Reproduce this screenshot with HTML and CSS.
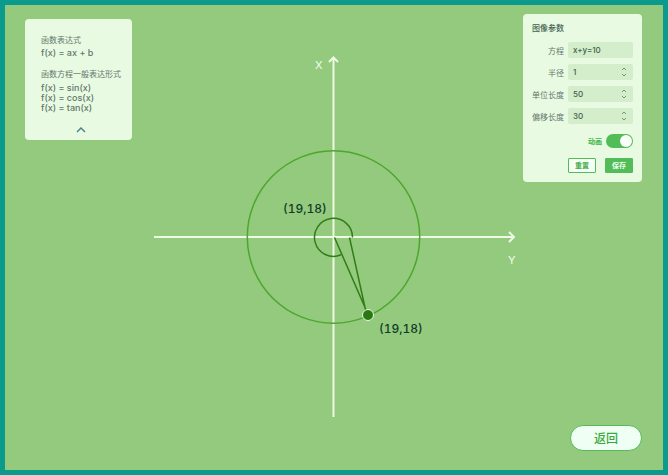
FILE: index.html
```html
<!DOCTYPE html>
<html lang="zh-CN">
<head>
<meta charset="utf-8">
<meta name="viewport" content="width=device-width, initial-scale=1">
<title>函数图像</title>
<link rel="stylesheet" href="styles.css">
</head>
<body>
<main class="stage">
  <svg class="graph" viewBox="5 5 658 465" role="img" aria-label="函数图像">
    <g class="axis">
      <path d="M154 237H514M509 232l5 5-5 5"/>
      <path d="M333.500 417V58M329 62l4.500-4.500 4.500 4.500"/>
    </g>
    <circle class="orbit" cx="333.500" cy="237" r="86.200"/>
    <path class="angle" d="M352.500 237.500A19 19 0 1 0 341 254.800"/>
    <path class="angle" d="M334.500 237.500L367 312M349.500 237.500L366 312"/>
    <circle class="point" cx="368" cy="315" r="5.500"/>
    <text class="axis-name" x="315" y="69">X</text>
    <text class="axis-name" x="508" y="264">Y</text>
    <text class="coordinate" x="283" y="213">(19,18)</text>
    <text class="coordinate" x="379" y="333">(19,18)</text>
  </svg>

  <aside class="panel formulas">
    <section class="formula-group">
      <h2>函数表达式</h2>
      <p>f(x) = ax + b</p>
    </section>
    <section class="formula-group">
      <h2>函数方程一般表达形式</h2>
      <p>f(x) = sin(x)</p>
      <p>f(x) = cos(x)</p>
      <p>f(x) = tan(x)</p>
    </section>
    <button class="collapse" type="button" aria-label="收起">
      <svg viewBox="0 0 10 6"><path d="M1 5l4-4 4 4"/></svg>
    </button>
  </aside>

  <form class="panel settings">
    <h2>图像参数</h2>
    <div class="fields">
      <label for="equation">方程</label>
      <div class="field"><input id="equation" type="text" value="x+y=10"></div>
      <label for="radius">半径</label>
      <div class="field">
        <input id="radius" type="number" value="1">
        <svg class="stepper" viewBox="0 0 6 10"><path d="M1 3l2-2 2 2M1 7l2 2 2-2"/></svg>
      </div>
      <label for="unit">单位长度</label>
      <div class="field">
        <input id="unit" type="number" value="50">
        <svg class="stepper" viewBox="0 0 6 10"><path d="M1 3l2-2 2 2M1 7l2 2 2-2"/></svg>
      </div>
      <label for="offset">偏移长度</label>
      <div class="field">
        <input id="offset" type="number" value="30">
        <svg class="stepper" viewBox="0 0 6 10"><path d="M1 3l2-2 2 2M1 7l2 2 2-2"/></svg>
      </div>
    </div>
    <div class="switch-row">
      <label for="animate">动画</label>
      <input id="animate" class="switch" type="checkbox" checked>
    </div>
    <div class="actions">
      <button class="action" type="reset">重置</button>
      <button class="action primary" type="submit">保存</button>
    </div>
  </form>

  <button class="back" type="button">返回</button>
</main>
</body>
</html>
```
FILE: styles.css
```css
* {
  box-sizing: border-box;
}

body {
  margin: 0;
  font-family: Inter, "Noto Sans CJK SC", sans-serif;
  font-size: 8px;
  color: #5f776b;
}

h2,
p {
  margin: 0;
}

button,
input {
  margin: 0;
  font-family: inherit;
}

button {
  cursor: pointer;
}

.stage {
  display: grid;
  grid-template-columns: auto 1fr auto;
  grid-template-rows: auto 1fr auto;
  min-height: 100vh;
  border: 5px solid #0c9a8c;
  background: #94ca7d;
}

.graph {
  grid-area: 1 / 1 / -1 / -1;
  width: 100%;
  height: 100%;
  fill: none;
}

.axis {
  stroke: #edfae4;
  stroke-width: 2;
}

.orbit {
  stroke: #4ea62e;
  stroke-width: 1.5;
}

.angle {
  stroke: #317d18;
  stroke-width: 1.5;
}

.point {
  fill: #2a7811;
  stroke: #e9fae2;
  stroke-width: 1;
}

.axis-name {
  fill: #f2fdec;
  font-size: 11px;
}

.coordinate {
  fill: #123c28;
  font-size: 12px;
  font-weight: 500;
  font-variant-numeric: tabular-nums;
}

.panel {
  z-index: 1;
  align-self: start;
  border-radius: 4px;
  background: #e9fae2;
}

.formulas {
  grid-area: 1 / 1 / 3 / 2;
  display: flex;
  flex-direction: column;
  margin: 14px 0 0 20px;
  padding: 15px 11px 7px 16px;
}

.formula-group {
  margin-bottom: 10px;
}

.formula-group h2 {
  margin-bottom: 2px;
  font-size: 8px;
  font-weight: 400;
  line-height: 12px;
}

.formula-group p {
  font-size: 9px;
  font-weight: 500;
  line-height: 10px;
}

.formula-group:nth-child(2) {
  margin-bottom: 14px;
}

.formula-group:nth-child(2) h2 {
  margin-bottom: 3px;
}

.collapse {
  display: flex;
  align-self: center;
  padding: 0;
  border: 0;
  background: none;
}

.collapse svg {
  width: 10px;
  height: 6px;
  fill: none;
  stroke: #4d8688;
  stroke-width: 1.5;
}

.settings {
  grid-area: 1 / 3 / 3 / 4;
  margin: 9px 21px 0 0;
  padding: 8px 9px 9px;
}

.settings h2 {
  margin-bottom: 8px;
  color: #405f50;
  font-size: 8px;
  font-weight: 500;
  line-height: 12px;
}

.fields {
  display: grid;
  grid-template-columns: auto 65px;
  align-items: center;
  gap: 6px 4px;
}

.fields label {
  text-align: right;
}

.field {
  display: flex;
  align-items: center;
  height: 16px;
  padding: 0 6px 0 5px;
  border-radius: 2px;
  background: #d4edcb;
}

.field input {
  flex: 1;
  min-width: 0;
  padding: 0;
  border: 0;
  outline: 0;
  background: none;
  color: #42604e;
  font-size: 8px;
  font-weight: 500;
  appearance: textfield;
}

.stepper {
  width: 6px;
  height: 10px;
  fill: none;
  stroke: #739680;
}

.switch-row {
  display: flex;
  align-items: center;
  justify-content: flex-end;
  gap: 4px;
  margin-top: 10px;
  color: #43b549;
  font-size: 7px;
  font-weight: 700;
}

.switch {
  display: flex;
  justify-content: flex-end;
  width: 27px;
  height: 14px;
  padding: 1px;
  border-radius: 7px;
  background: #52bc58;
  appearance: none;
}

.switch::before {
  width: 12px;
  border-radius: 50%;
  background: #fafffa;
  content: "";
}

.switch:not(:checked) {
  justify-content: flex-start;
  background: #a9c9a2;
}

.actions {
  display: flex;
  justify-content: flex-end;
  gap: 9px;
  margin-top: 10px;
}

.action {
  width: 28px;
  height: 15px;
  padding: 0;
  border: 1px solid #52bc58;
  border-radius: 1px;
  background: #f5fff5;
  color: #3fab45;
  font-size: 7px;
  font-weight: 700;
  line-height: 12px;
}

.primary {
  background: #52bc58;
  color: #edffed;
}

.back {
  z-index: 1;
  grid-area: 3 / 3;
  justify-self: end;
  width: 72px;
  height: 26px;
  margin: 0 21px 19px 0;
  padding: 0 0 2px;
  border: 1px solid #52bc58;
  border-radius: 13px;
  background: #effff4;
  color: #3aa83f;
  font-size: 12px;
  font-weight: 500;
}
```
